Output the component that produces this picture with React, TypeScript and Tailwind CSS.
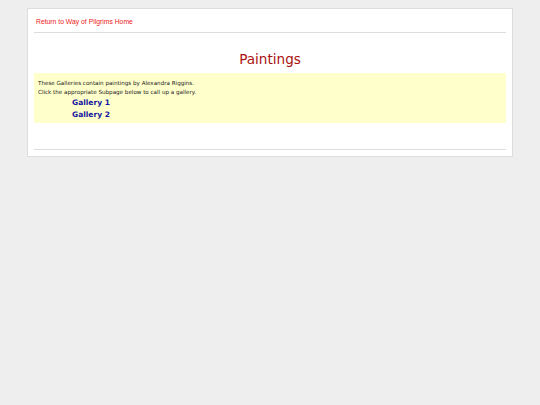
export default function App() {
  return (
    <div className="min-h-screen bg-[#eeeeee] pt-[8px]">
      <div className="mx-auto w-[486px] border border-[#dddddd] bg-white px-[6px] pb-[6px]">
        <div className="flex h-[23px] items-end pl-[2px] pb-[6px]">
          <a href="#" className="text-[6.8px] leading-[9px] text-[#ee2222]" style={{ fontFamily: '"Liberation Sans", Arial, sans-serif' }}>
            Return to Way of Pilgrims Home
          </a>
        </div>
        <div className="border-t border-[#dddddd]" />
        <h1 className="mt-[18px] mb-[6px] text-center text-[13.6px] leading-[16px] text-[#aa1111]" style={{ fontFamily: '"DejaVu Sans", Verdana, sans-serif' }}>
          Paintings
        </h1>
        <div className="bg-[#ffffcc] pl-[4px] pt-[6px] pb-[3px]" style={{ fontFamily: '"DejaVu Sans", Verdana, sans-serif' }}>
          <p className="text-[5.6px] leading-[9px] text-[#1a1a1a]">These Galleries contain paintings by Alexandra Riggins.</p>
          <p className="text-[5.6px] leading-[9px] text-[#1a1a1a]">Click the appropriate Subpage below to call up a gallery.</p>
          <div className="pl-[34px]">
            <a href="#" className="block text-[7.5px] font-bold leading-[11.5px] text-[#1515a0]">Gallery 1</a>
            <a href="#" className="block text-[7.5px] font-bold leading-[11.5px] text-[#1515a0]">Gallery 2</a>
          </div>
        </div>
        <div className="mt-[26px] border-t border-[#dddddd]" />
      </div>
    </div>
  );
}
